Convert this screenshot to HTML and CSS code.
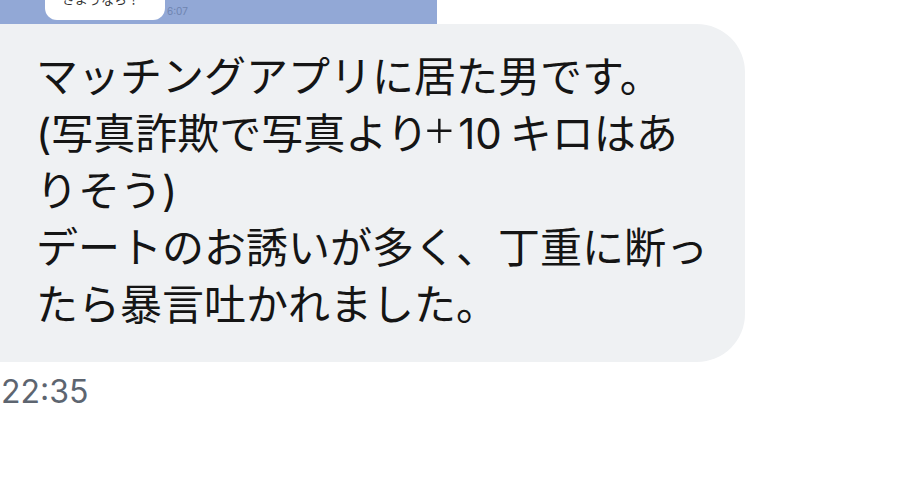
FILE: index.html
```html
<!DOCTYPE html>
<html lang="ja">
  <head>
    <meta charset="UTF-8" />
    <meta name="viewport" content="width=device-width, initial-scale=1.0" />
    <title>トーク</title>
    <link rel="stylesheet" href="styles.css">
  </head>
  <body>
    <div class="chat">
      <!-- 上の画像（切れている） -->
      <div class="photo-strip">
        <div class="mini-bubble">さようなら！</div>
        <span class="mini-time">6:07</span>
      </div>

      <div class="bubble">
        マッチングアプリに居た男です。<br>(写真詐欺で写真より<span class="plus">+</span><span class="num">10</span>キロはありそう)<br>デートのお誘いが多く、丁重に断ったら暴言吐かれました。
      </div>
      <div class="time">22:35</div>
    </div>
  </body>
</html>
```

FILE: styles.css
```css
body {
  margin: 0;
  background: #ffffff;
  font-family: "Noto Sans CJK JP", "Noto Sans", sans-serif;
  overflow: hidden;
}
.chat {
  width: 898px;
  height: 487px;
}
.photo-strip {
  width: 437px;
  height: 24px;
  box-sizing: border-box;
  padding: 0 0 4px 45px;
  background: #92a8d6;
  overflow: hidden;
  display: flex;
  align-items: flex-end;
}
.mini-bubble {
  width: 120px;
  height: 36px;
  flex-shrink: 0;
  box-sizing: border-box;
  padding: 0 0 15px 17px;
  background: #ffffff;
  border-radius: 12px;
  display: flex;
  align-items: flex-end;
  font-size: 13px;
  line-height: 13px;
  color: #333;
}
.mini-time {
  margin: 0 0 4px 2px;
  font-family: Inter, "Noto Sans", sans-serif;
  font-size: 10px;
  line-height: 10px;
  color: #6f84b0;
}
.bubble {
  width: 745px;
  box-sizing: border-box;
  padding: 24px 29px 29px 36px;
  background: #eff1f3;
  border-radius: 0 48px 48px 0;
  font-family: Inter, "Noto Sans CJK JP", sans-serif;
  font-size: 42px;
  line-height: 57px;
  color: #151515;
}
.plus {
  margin-left: -4px;
  font-family: "Noto Sans", sans-serif;
  font-size: 52px;
  font-weight: 300;
  line-height: 0;
}
.num {
  margin: 0 8px 0 4px;
}
.time {
  margin-top: 14px;
  padding-left: 1px;
  font-family: Inter, "Noto Sans", sans-serif;
  font-size: 32px;
  line-height: 32px;
  color: #5d6570;
}
```
